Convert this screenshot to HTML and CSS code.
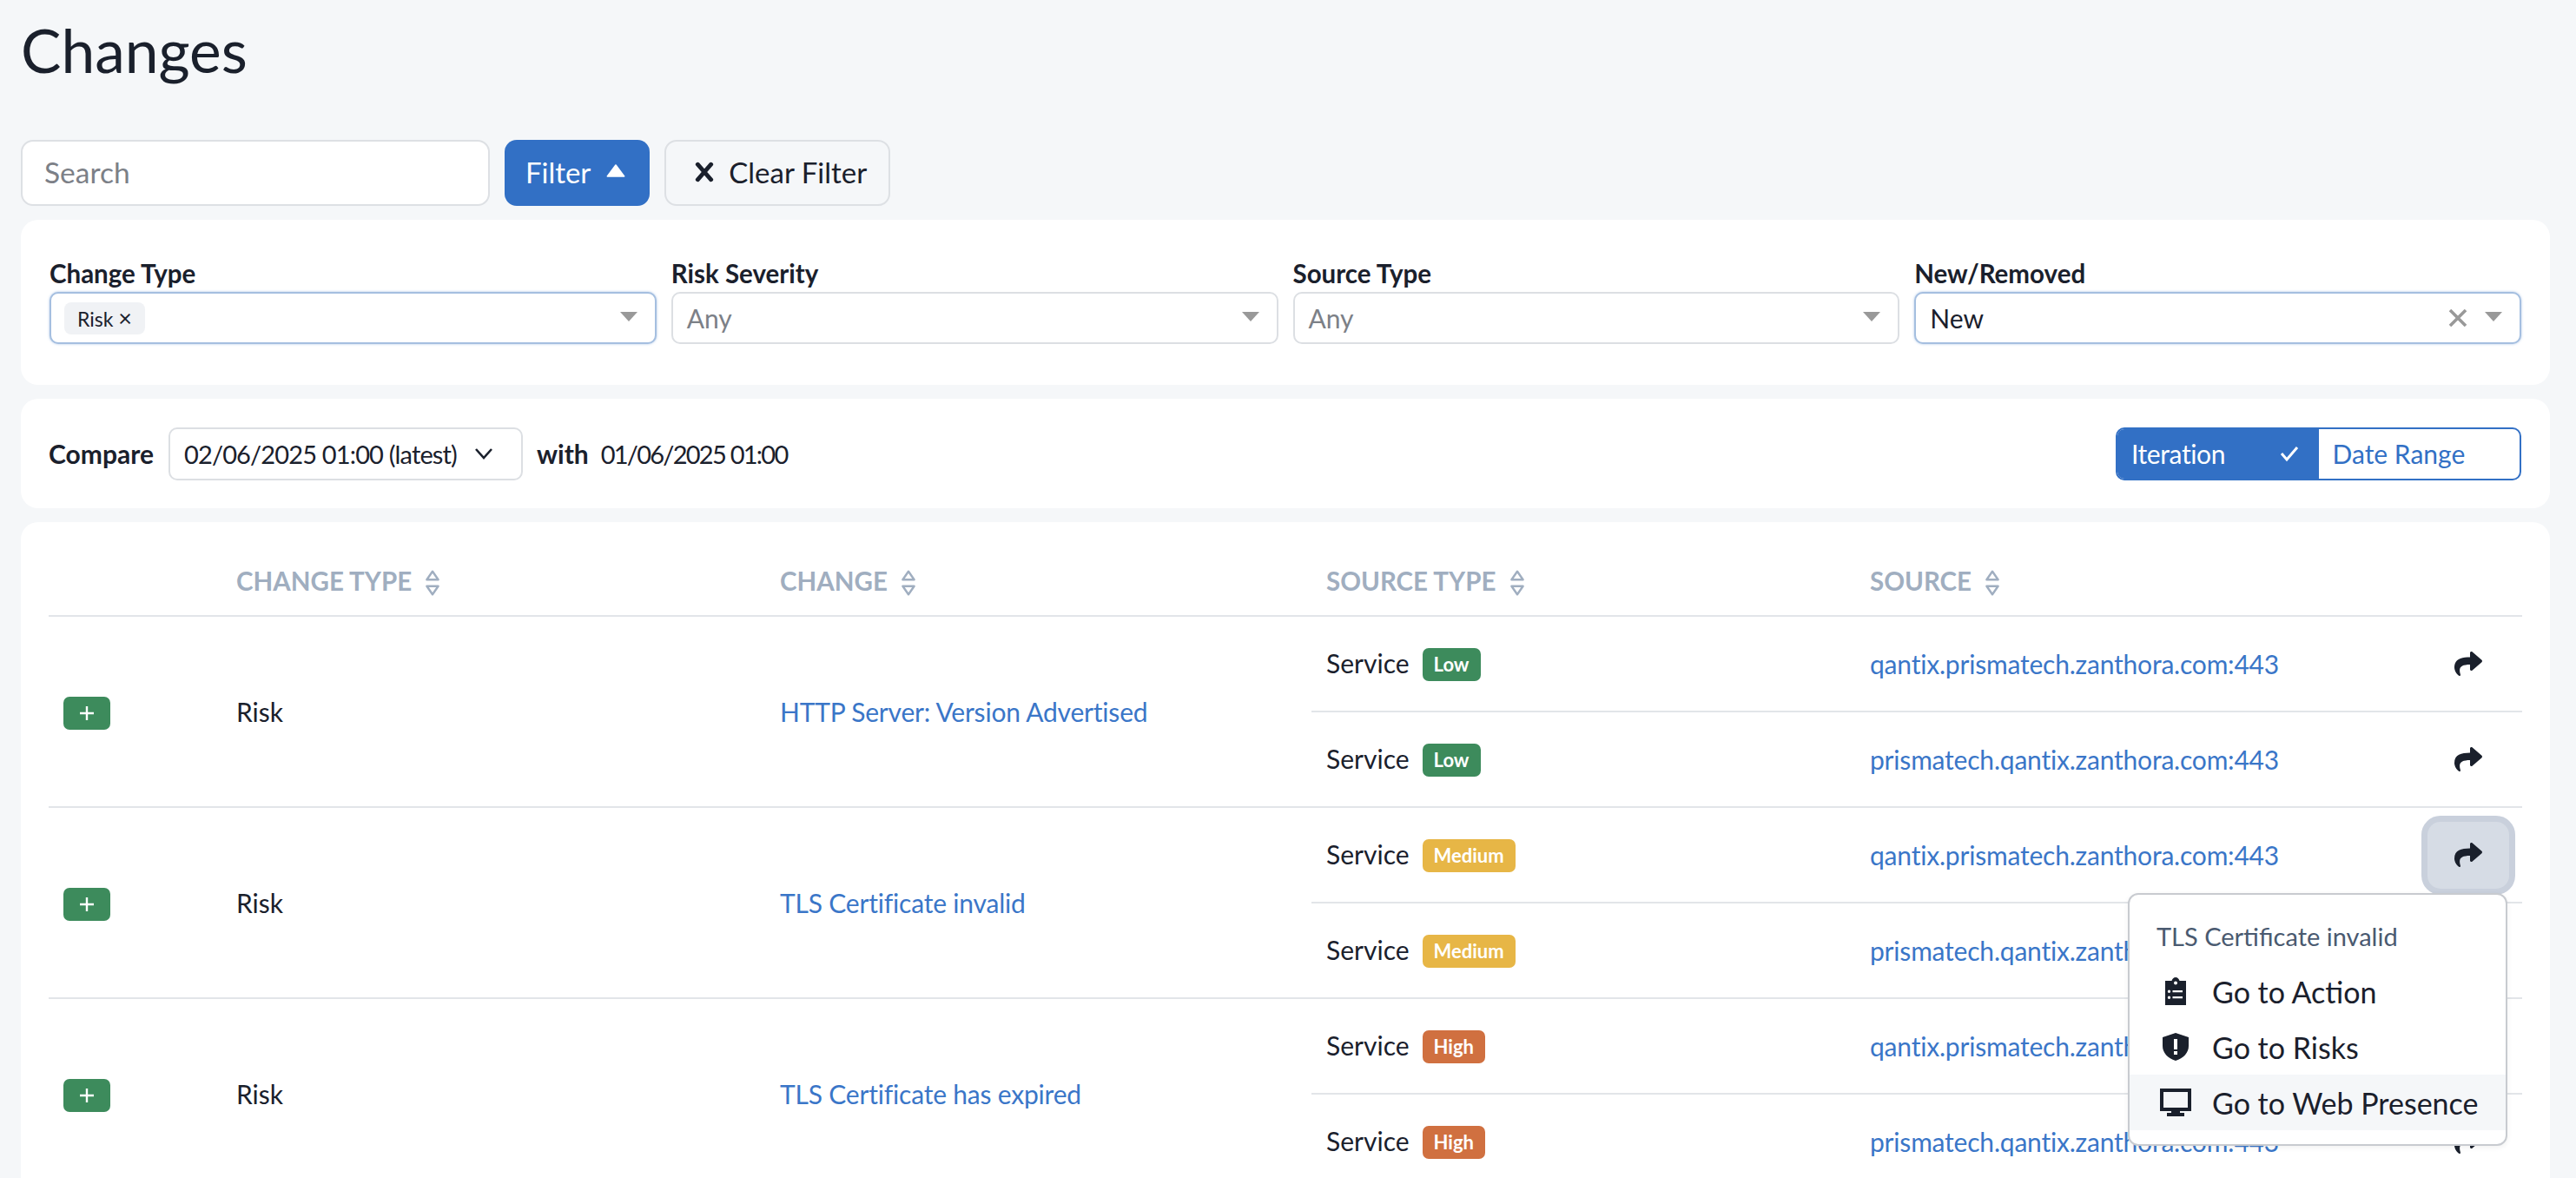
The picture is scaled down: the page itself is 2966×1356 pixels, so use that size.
FILE: index.html
```html
<!DOCTYPE html>
<html lang="en">
<head>
<meta charset="utf-8">
<title>Changes</title>
<link rel="stylesheet" href="styles.css">
</head>
<body>
<main class="page">
  <h1 class="title">Changes</h1>
  <div class="toolbar">
    <div class="search">Search</div>
    <button class="btn btn-primary">Filter <svg class="caret-up" viewBox="0 0 20 14"><path d="M10 1 L19 13 H1 Z" fill="currentColor" stroke="currentColor" stroke-width="1.5" stroke-linejoin="round"/></svg></button>
    <button class="btn btn-ghost"><svg class="x-icon" viewBox="0 0 20 20"><path d="M3 2 L17 18 M17 2 L3 18" stroke="currentColor" stroke-width="4.400" stroke-linecap="round" fill="none"/></svg> Clear Filter</button>
  </div>

  <section class="card filters">
    <div class="field">
      <label>Change Type</label>
      <div class="select focused"><span class="chip">Risk <span class="chip-x">×</span></span><span class="arrow"></span></div>
    </div>
    <div class="field">
      <label>Risk Severity</label>
      <div class="select"><span class="ph">Any</span><span class="arrow"></span></div>
    </div>
    <div class="field">
      <label>Source Type</label>
      <div class="select"><span class="ph">Any</span><span class="arrow"></span></div>
    </div>
    <div class="field">
      <label>New/Removed</label>
      <div class="select focused"><span class="val">New</span><svg class="clear" viewBox="0 0 22 20"><path d="M2 1 L20 19 M20 1 L2 19" stroke="currentColor" stroke-width="3.600" fill="none"/></svg><span class="arrow arrow-near"></span></div>
    </div>
  </section>

  <section class="card compare">
    <strong class="cmp-label">Compare</strong>
    <div class="dd">02/06/2025 01:00 (latest)<svg class="chev" viewBox="0 0 22 14"><path d="M2 2 L11 12 L20 2" stroke="currentColor" stroke-width="2.600" fill="none"/></svg></div>
    <strong class="cmp-with">with</strong>
    <span class="cmp-date">01/06/2025 01:00</span>
    <div class="toggle">
      <span class="tg tg-on">Iteration<svg class="check" viewBox="0 0 24 20"><path d="M3 10 L9 17 L21 3" stroke="currentColor" stroke-width="3" fill="none"/></svg></span>
      <span class="tg">Date Range</span>
    </div>
  </section>

  <section class="card table-card">
    <table class="tbl">
      <colgroup><col class="c1"><col class="c2"><col class="c3"><col class="c4"><col class="c5"><col class="c6"></colgroup>
      <thead>
        <tr>
          <th></th>
          <th>Change Type <svg class="sort" viewBox="0 0 20 34"><path d="M10 3 L17 13 H3 Z M10 31 L17 21 H3 Z" stroke="currentColor" stroke-width="2.600" fill="none" stroke-linejoin="round"/></svg></th>
          <th>Change <svg class="sort" viewBox="0 0 20 34"><path d="M10 3 L17 13 H3 Z M10 31 L17 21 H3 Z" stroke="currentColor" stroke-width="2.600" fill="none" stroke-linejoin="round"/></svg></th>
          <th>Source Type <svg class="sort" viewBox="0 0 20 34"><path d="M10 3 L17 13 H3 Z M10 31 L17 21 H3 Z" stroke="currentColor" stroke-width="2.600" fill="none" stroke-linejoin="round"/></svg></th>
          <th>Source <svg class="sort" viewBox="0 0 20 34"><path d="M10 3 L17 13 H3 Z M10 31 L17 21 H3 Z" stroke="currentColor" stroke-width="2.600" fill="none" stroke-linejoin="round"/></svg></th>
          <th></th>
        </tr>
      </thead>
      <tbody>
        <tr>
          <td rowspan="2"><span class="plus"><svg viewBox="0 0 18 18"><path d="M9 1 V17 M1 9 H17" stroke="currentColor" stroke-width="2.400" fill="none"/></svg></span></td>
          <td rowspan="2">Risk</td>
          <td rowspan="2"><a class="lnk">HTTP Server: Version Advertised</a></td>
          <td><span class="svc">Service</span><span class="badge low">Low</span></td>
          <td><a class="lnk">qantix.prismatech.zanthora.com:443</a></td>
          <td class="act"><span class="act-btn"><svg class="share" viewBox="0 0 512 512"><path d="M503.691 189.836L327.687 37.851C312.281 24.546 288 35.347 288 56.015v80.053C127.371 137.907 0 170.1 0 322.326c0 61.441 39.581 122.309 83.333 154.132 13.653 9.931 33.111-2.533 28.077-18.631C66.066 312.814 132.917 274.316 288 272.085V360c0 20.7 24.3 31.453 39.687 18.164l176.004-152c11.071-9.562 11.086-26.753 0-36.328z"/></svg></span></td>
        </tr>
        <tr class="sub">
          <td><span class="svc">Service</span><span class="badge low">Low</span></td>
          <td><a class="lnk">prismatech.qantix.zanthora.com:443</a></td>
          <td class="act"><span class="act-btn"><svg class="share" viewBox="0 0 512 512"><path d="M503.691 189.836L327.687 37.851C312.281 24.546 288 35.347 288 56.015v80.053C127.371 137.907 0 170.1 0 322.326c0 61.441 39.581 122.309 83.333 154.132 13.653 9.931 33.111-2.533 28.077-18.631C66.066 312.814 132.917 274.316 288 272.085V360c0 20.7 24.3 31.453 39.687 18.164l176.004-152c11.071-9.562 11.086-26.753 0-36.328z"/></svg></span></td>
        </tr>
        <tr>
          <td rowspan="2"><span class="plus"><svg viewBox="0 0 18 18"><path d="M9 1 V17 M1 9 H17" stroke="currentColor" stroke-width="2.400" fill="none"/></svg></span></td>
          <td rowspan="2">Risk</td>
          <td rowspan="2"><a class="lnk">TLS Certificate invalid</a></td>
          <td><span class="svc">Service</span><span class="badge med">Medium</span></td>
          <td><a class="lnk">qantix.prismatech.zanthora.com:443</a></td>
          <td class="act">
            <span class="act-btn active"><svg class="share" viewBox="0 0 512 512"><path d="M503.691 189.836L327.687 37.851C312.281 24.546 288 35.347 288 56.015v80.053C127.371 137.907 0 170.1 0 322.326c0 61.441 39.581 122.309 83.333 154.132 13.653 9.931 33.111-2.533 28.077-18.631C66.066 312.814 132.917 274.316 288 272.085V360c0 20.7 24.3 31.453 39.687 18.164l176.004-152c11.071-9.562 11.086-26.753 0-36.328z"/></svg></span>
            <div class="menu">
              <div class="menu-head">TLS Certificate invalid</div>
              <div class="menu-item"><svg class="mi mi-clip" viewBox="0 0 24 32"><path fill-rule="evenodd" d="M0 4H7.500C8 1.700 9.800 0 12 0S16 1.700 16.500 4H24V32H0ZM12 4.500A2 2 0 1 0 12 8.500 2 2 0 1 0 12 4.500ZM4.500 14.500A1.700 1.700 0 1 0 4.500 17.900 1.700 1.700 0 1 0 4.500 14.500ZM4.500 21.500A1.700 1.700 0 1 0 4.500 24.900 1.700 1.700 0 1 0 4.500 21.500ZM8.500 15V17.200H20V15ZM8.500 22V24.200H20V22Z"/></svg>Go to Action</div>
              <div class="menu-item"><svg class="mi mi-shield" viewBox="0 0 30 32"><path fill-rule="evenodd" d="M15 0L30 5V15C30 23 24 29 15 32 6 29 0 23 0 15V5ZM13 7V19H17V7ZM13 21V25H17V21Z"/></svg>Go to Risks</div>
              <div class="menu-item hover"><svg class="mi mi-desk" viewBox="0 0 36 32"><path fill-rule="evenodd" d="M0 0H36V26H23V28H28V32H8V28H13V26H0ZM4 4V22H32V4Z"/></svg>Go to Web Presence</div>
            </div>
          </td>
        </tr>
        <tr class="sub">
          <td><span class="svc">Service</span><span class="badge med">Medium</span></td>
          <td><a class="lnk">prismatech.qantix.zanthora.com:443</a></td>
          <td class="act"><span class="act-btn"><svg class="share" viewBox="0 0 512 512"><path d="M503.691 189.836L327.687 37.851C312.281 24.546 288 35.347 288 56.015v80.053C127.371 137.907 0 170.1 0 322.326c0 61.441 39.581 122.309 83.333 154.132 13.653 9.931 33.111-2.533 28.077-18.631C66.066 312.814 132.917 274.316 288 272.085V360c0 20.7 24.3 31.453 39.687 18.164l176.004-152c11.071-9.562 11.086-26.753 0-36.328z"/></svg></span></td>
        </tr>
        <tr>
          <td rowspan="2"><span class="plus"><svg viewBox="0 0 18 18"><path d="M9 1 V17 M1 9 H17" stroke="currentColor" stroke-width="2.400" fill="none"/></svg></span></td>
          <td rowspan="2">Risk</td>
          <td rowspan="2"><a class="lnk">TLS Certificate has expired</a></td>
          <td><span class="svc">Service</span><span class="badge high">High</span></td>
          <td><a class="lnk">qantix.prismatech.zanthora.com:443</a></td>
          <td class="act"><span class="act-btn"><svg class="share" viewBox="0 0 512 512"><path d="M503.691 189.836L327.687 37.851C312.281 24.546 288 35.347 288 56.015v80.053C127.371 137.907 0 170.1 0 322.326c0 61.441 39.581 122.309 83.333 154.132 13.653 9.931 33.111-2.533 28.077-18.631C66.066 312.814 132.917 274.316 288 272.085V360c0 20.7 24.3 31.453 39.687 18.164l176.004-152c11.071-9.562 11.086-26.753 0-36.328z"/></svg></span></td>
        </tr>
        <tr class="sub">
          <td><span class="svc">Service</span><span class="badge high">High</span></td>
          <td><a class="lnk">prismatech.qantix.zanthora.com:443</a></td>
          <td class="act"><span class="act-btn"><svg class="share" viewBox="0 0 512 512"><path d="M503.691 189.836L327.687 37.851C312.281 24.546 288 35.347 288 56.015v80.053C127.371 137.907 0 170.1 0 322.326c0 61.441 39.581 122.309 83.333 154.132 13.653 9.931 33.111-2.533 28.077-18.631C66.066 312.814 132.917 274.316 288 272.085V360c0 20.7 24.3 31.453 39.687 18.164l176.004-152c11.071-9.562 11.086-26.753 0-36.328z"/></svg></span></td>
        </tr>
      </tbody>
    </table>
  </section>
</main>
</body>
</html>
```

FILE: styles.css
```css
* { box-sizing: border-box; }
html, body { margin: 0; height: 100%; overflow: hidden; }
body {
  background: #f5f7f9;
  color: #1a202c;
  font-family: "Lato", "Noto Sans", sans-serif;
  font-size: 30px;
  font-weight: 400;
}
.page { padding: 0 30px 0 24px; }
.title {
  margin: 0;
  height: 161px;
  padding-top: 17px;
  font-size: 69.500px;
  font-weight: 400;
  line-height: 80px;
}
.toolbar { display: flex; gap: 17px; height: 76px; }
.search {
  width: 540px;
  background: #fff;
  border: 2px solid #dde0e4;
  border-radius: 14px;
  color: #7c8087;
  font-size: 33.500px;
  padding: 0 25px 2px;
  display: flex;
  align-items: center;
}
.btn {
  font-family: inherit;
  font-size: 33px;
  font-weight: 400;
  border-radius: 14px;
  display: flex;
  align-items: center;
  padding: 0 0 2px;
  justify-content: center;
  white-space: pre;
}
.btn-primary { width: 167px; background: #3270c5; border: 0; color: #fff; gap: 10px; padding-right: 4px; }
.caret-up { width: 22px; height: 15px; margin-top: -4px; }
.btn-ghost { width: 260px; background: #f5f7f9; border: 2px solid #dde0e4; color: #1a202c; gap: 9px; padding-left: 8px; }
.x-icon { width: 22px; height: 24px; }

.card { background: #fff; border-radius: 20px; margin-top: 16px; }
.filters {
  display: grid;
  grid-template-columns: repeat(4, 1fr);
  gap: 17px;
  padding: 40px 33px 47px;
  height: 190px;
}
.field label { display: block; font-size: 29.500px; font-weight: 700; line-height: 43px; }
.select {
  height: 60px;
  background: #fff;
  border: 2px solid #dcdfe3;
  border-radius: 10px;
  display: flex;
  align-items: center;
  padding: 0 18px 0 16px;
  gap: 8px;
}
.select.focused { border-color: #a5bfe0; box-shadow: 0 0 3px rgba(120, 160, 215, .6); }
.chip {
  background: #f0f2f5;
  border-radius: 8px;
  font-size: 23px;
  font-weight: 400;
  line-height: 36px;
  padding: 0 15px;
  margin-left: -1px;
  white-space: nowrap;
}
.chip-x { font-size: 27px; }
.ph { color: #7c8087; }
.val { color: #1a202c; }
.arrow {
  margin-left: auto;
  width: 0;
  height: 0;
  border-left: 10px solid transparent;
  border-right: 10px solid transparent;
  border-top: 11px solid #999;
  margin-right: 2px;
  margin-top: -4px;
}
.arrow-near { margin-left: 12px; }
.clear { margin-left: auto; width: 22px; height: 20px; color: #999; }

.compare {
  display: flex;
  align-items: center;
  height: 126px;
  padding: 0 33px 0 32px;
  white-space: nowrap;
}
.cmp-label, .cmp-with { font-size: 30px; font-weight: 700; }
.dd {
  margin-left: 17px;
  width: 408px;
  height: 61px;
  border: 2px solid #dcdfe3;
  border-radius: 10px;
  display: flex;
  align-items: center;
  justify-content: flex-start;
  gap: 20px;
  padding: 0 16px;
  font-size: 29px;
  letter-spacing: -.85px;
}
.chev { width: 22px; height: 14px; }
.cmp-with { margin-left: 16px; }
.cmp-date { margin-left: 14px; font-size: 29px; letter-spacing: -1.750px; }
.toggle {
  margin-left: auto;
  display: flex;
  width: 467px;
  height: 61px;
  border: 2px solid #3270c5;
  border-radius: 10px;
  overflow: hidden;
  color: #3270c5;
}
.tg { flex: 1; display: flex; align-items: center; padding: 0 16px; justify-content: space-between; }
.tg-on { background: #3270c5; color: #fff; letter-spacing: -.4px; }
.check { width: 24px; height: 20px; margin-right: 6px; }

.table-card { padding: 0 32px; height: 755px; overflow: hidden; border-radius: 20px 20px 0 0; }
.tbl { width: 100%; border-collapse: collapse; table-layout: fixed; }
.c1 { width: 199px; }
.c2 { width: 626px; }
.c3 { width: 629px; }
.c4 { width: 626px; }
.c5 { width: 644px; }
.tbl th {
  height: 108px;
  padding: 29px 17px 0;
  text-align: left;
  color: #a0aec0;
  text-transform: uppercase;
  font-size: 29.500px;
  font-weight: 700;
  border-bottom: 2px solid #e2e5e9;
  white-space: nowrap;
}
.sort { width: 20px; height: 32px; vertical-align: -7px; margin-left: 7px; }
.tbl td {
  height: 110px;
  padding: 0 17px;
  border-bottom: 2px solid #e2e5e9;
  white-space: nowrap;
}
.lnk { color: #3a76c8; letter-spacing: -.2px; }
.svc { margin-right: 15px; }
.badge {
  display: inline-block;
  color: #fff;
  font-size: 22px;
  font-weight: 700;
  line-height: 38px;
  padding: 0 13px;
  border-radius: 7px;
  vertical-align: 2px;
}
.low { background: #3d8b5c; }
.med { background: #e7b646; }
.high { background: #d07040; }
.plus {
  display: flex;
  align-items: center;
  justify-content: center;
  width: 54px;
  height: 38px;
  margin-top: 4px;
  background: #3d8b5c;
  border-radius: 7px;
  color: #fff;
}
.plus svg { width: 18px; height: 18px; }
.act { position: relative; padding: 0 !important; }
.act-btn {
  position: absolute;
  top: 9px;
  right: 8px;
  width: 108px;
  height: 91px;
  display: flex;
  align-items: center;
  justify-content: center;
  border-radius: 22px;
  border: 7px solid transparent;
}
.act-btn.active { background: #d6dce5; border-color: #c9d0dc; }
.share { width: 32px; height: 32px; fill: #1a202c; margin-top: -2px; }
.menu {
  position: absolute;
  top: 98px;
  right: 17px;
  width: 437px;
  height: 291px;
  background: #fff;
  border: 2px solid #c8cbd0;
  border-radius: 12px;
  box-shadow: 0 2px 6px rgba(0, 0, 0, .06);
  padding-top: 17px;
  z-index: 5;
}
.menu-head { color: #4a5a70; font-size: 29px; line-height: 62px; padding-left: 31px; }
.menu-item { display: flex; align-items: center; height: 64px; font-size: 34px; }
.menu-item.hover { background: #f5f7f9; }
.mi { fill: #1a202c; flex: none; }
.mi-clip { width: 24px; height: 32px; margin: 0 30px 0 41px; }
.mi-shield { width: 30px; height: 32px; margin: 0 27px 0 38px; }
.mi-desk { width: 36px; height: 32px; margin: 0 24px 0 35px; }
```
